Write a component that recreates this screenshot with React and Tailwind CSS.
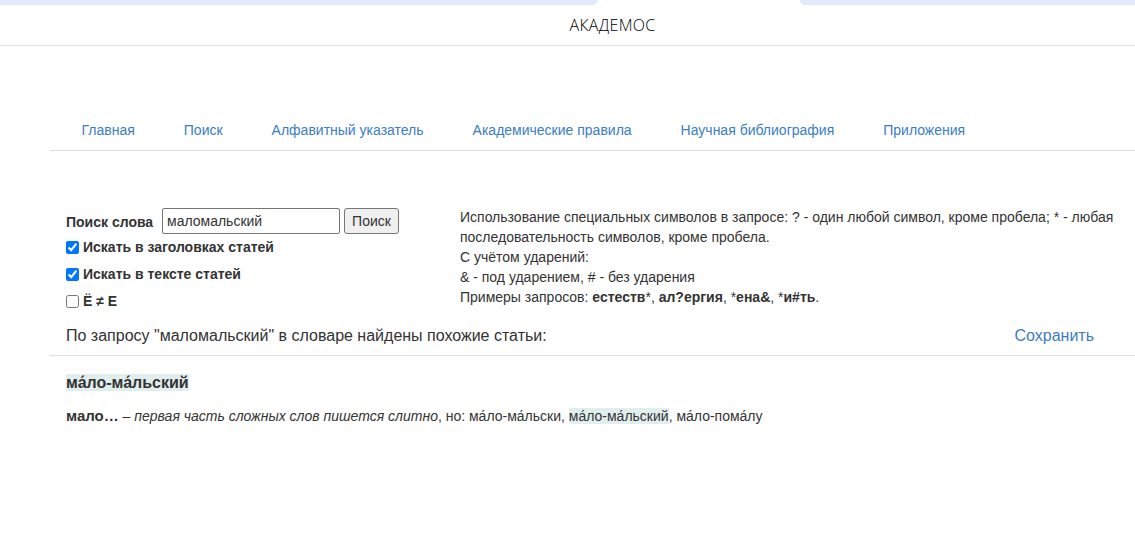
import React from "react";

const navLinks = [
  "Главная",
  "Поиск",
  "Алфавитный указатель",
  "Академические правила",
  "Научная библиография",
  "Приложения",
];

const App = () => {
  return (
    <div className="min-h-[545px] bg-white text-[#333] font-['Liberation_Sans',Arial,sans-serif]">
      {/* top tabs strip */}
      <div className="flex h-[5px]">
        <div className="w-[598px] bg-[#dfeafb] rounded-br-[6px]"></div>
        <div className="w-[202px]"></div>
        <div className="flex-1 bg-[#dfeafb] rounded-bl-[6px]"></div>
      </div>

      <div className="h-[41px] flex items-center justify-center border-b border-[#e3e3e3] pl-[90px]">
        <span className="font-['Open_Sans',sans-serif] font-light text-[16px] text-black tracking-[0.3px]">
          АКАДЕМОС
        </span>
      </div>

      <div className="ml-[50px]">
        <ul className="flex pl-[7px] mt-[65px] border-b border-[#dddddd] h-[40px] items-center">
          {navLinks.map((link) => (
            <li key={link} className="px-[24.5px] text-[14px] text-[#3b7dc4]">
              {link}
            </li>
          ))}
        </ul>

        <div className="flex mt-[56px]">
          <div className="w-[410px] pl-[16px] pt-[1px]">
            <div className="flex items-center">
              <span className="text-[14px] font-bold w-[96px] pt-[2px]">Поиск слова</span>
              <input
                className="w-[178px] h-[26px] border border-[#767676] rounded-[2px] px-[4px] text-[14px] text-[#333]"
                defaultValue="маломальский"
              />
              <button className="ml-[4px] w-[55px] h-[26px] border border-[#767676] rounded-[3px] bg-[#efefef] text-[14px] text-[#333]">
                Поиск
              </button>
            </div>
            <label className="flex items-center h-[27px] text-[14px] font-bold">
              <input type="checkbox" defaultChecked className="m-0 mr-[4px] w-[13px] h-[13px]" />
              Искать в заголовках статей
            </label>
            <label className="flex items-center h-[27px] text-[14px] font-bold">
              <input type="checkbox" defaultChecked className="m-0 mr-[4px] w-[13px] h-[13px]" />
              Искать в тексте статей
            </label>
            <label className="flex items-center h-[27px] text-[14px] font-bold">
              <input type="checkbox" className="m-0 mr-[4px] w-[13px] h-[13px]" />
              Ё ≠ Е
            </label>
          </div>
          <div className="flex-1 pr-[15px] text-[14px] leading-[20px]">
            <p>
              Использование специальных символов в запросе: ? - один любой символ, кроме пробела; * - любая
              последовательность символов, кроме пробела.
            </p>
            <p>С учётом ударений:</p>
            <p>&amp; - под ударением, # - без ударения</p>
            <p>
              Примеры запросов: <b>естеств</b>*, <b>ал?ергия</b>, *<b>ена&amp;</b>, *<b>и#ть</b>.
            </p>
          </div>
        </div>

        <div className="flex justify-between items-center pl-[16px] pr-[41px] h-[40px] mt-[1px] border-b border-[#dddddd] text-[16px]">
          <span>По запросу "маломальский" в словаре найдены похожие статьи:</span>
          <span className="text-[#3b7dc4]">Сохранить</span>
        </div>

        <div className="pl-[16px] pt-[15px]">
          <div>
            <span className="bg-[#e1eeee] font-bold text-[16px] leading-[20px]">ма́ло-ма́льский</span>
          </div>
          <p className="mt-[11px] text-[14px] leading-[20px]">
            <b className="text-[15px]">мало…</b> – <i>первая часть сложных слов пишется слитно</i>, но: ма́ло-ма́льски,{" "}
            <span className="bg-[#e1eeee]">ма́ло-ма́льский</span>, ма́ло-пома́лу
          </p>
        </div>
      </div>
    </div>
  );
};

export default App;
